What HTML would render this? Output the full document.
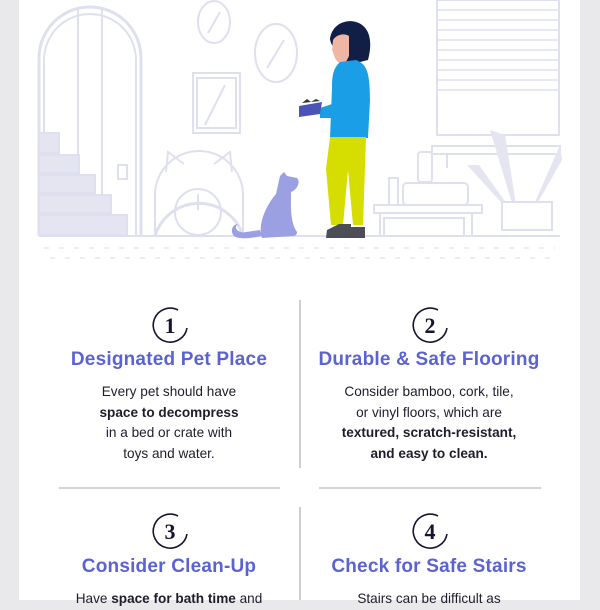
<!DOCTYPE html>
<html><head><style>
body{margin:0;width:600px;height:600px;overflow:hidden;background:#e9e9ec;font-family:"Liberation Sans",sans-serif}
.page{position:absolute;left:19px;top:0;width:561px;height:600px;background:#fff}
h2{position:absolute;margin:0;width:300px;text-align:center;font-size:19px;font-weight:bold;color:#5b63d3;letter-spacing:0.2px}
p{position:absolute;margin:0;width:300px;text-align:center;font-size:13.6px;line-height:20.5px;color:#1d1d2b}
b{font-weight:bold}
.v{position:absolute;left:299px;width:2px;background:#cfcfd3}
.h{position:absolute;top:487px;height:2px;background:#d3d3d7}
</style></head><body>
<div class="page"></div>
<svg width="600" height="270" style="position:absolute;left:0;top:0" fill="none" stroke="#dfe0ef" stroke-width="2">
<path d="M39 236V58a51 51 0 0 1 102 0V236" stroke-width="3"/>
<path d="M44 236V60a46 46 0 0 1 92 0V236"/>
<line x1="78" y1="8" x2="78" y2="236"/><line x1="102" y1="8" x2="102" y2="236"/>
<g fill="#e4e5f1" stroke="#dfe0ef">
<rect x="39" y="133" width="20" height="20"/><rect x="39" y="155" width="40" height="18"/><rect x="39" y="175" width="56" height="18"/><rect x="39" y="195" width="72" height="18"/><rect x="39" y="215" width="88" height="20"/>
</g>
<ellipse cx="214" cy="22" rx="16" ry="21"/><line x1="208" y1="33" x2="220" y2="12"/>
<ellipse cx="276" cy="53" rx="21" ry="29"/><line x1="267" y1="68" x2="284" y2="40"/>
<rect x="193" y="73" width="47" height="60"/><rect x="197" y="78" width="39" height="50"/><line x1="205" y1="125" x2="225" y2="85"/>
<rect x="118" y="165" width="9" height="14"/>
<path d="M155 236a46 46 0 0 1 88 0" stroke-width="3"/>
<path d="M155 236V195a43 43 0 0 1 88 0V236"/>
<path d="M166 172l2-20 16 12M232 172l-2-20-16 12"/>
<circle cx="198" cy="212" r="23"/><line x1="198" y1="194" x2="198" y2="210"/>
<rect x="437" y="0" width="122" height="135"/>
<g stroke-width="1.5"><line x1="437" y1="10" x2="559" y2="10"/><line x1="437" y1="20" x2="559" y2="20"/><line x1="437" y1="30" x2="559" y2="30"/><line x1="437" y1="40" x2="559" y2="40"/><line x1="437" y1="50" x2="559" y2="50"/><line x1="437" y1="60" x2="559" y2="60"/><line x1="437" y1="70" x2="559" y2="70"/><line x1="437" y1="80" x2="559" y2="80"/><line x1="437" y1="90" x2="559" y2="90"/></g>
<rect x="432" y="146" width="128" height="8"/><line x1="447" y1="154" x2="447" y2="168"/>
<g fill="#e4e5f1" stroke="none"><path d="M520 230l-30-100 15 5z"/><path d="M522 225l-55-60 12 0z"/><path d="M525 225l35-80 2 15z"/></g>
<path d="M502 230h50v-28h-50z" fill="#fff"/>
<rect x="374" y="205" width="108" height="8"/><line x1="380" y1="213" x2="380" y2="236"/><line x1="472" y1="213" x2="472" y2="236"/><rect x="384" y="218" width="80" height="18"/>
<rect x="403" y="183" width="65" height="22" rx="4"/><rect x="418" y="152" width="14" height="30" rx="3"/><rect x="389" y="178" width="9" height="27"/>
<line x1="39" y1="236" x2="560" y2="236"/>
<g stroke-dasharray="5 10" stroke-width="1.3"><line x1="44" y1="248" x2="555" y2="248"/><line x1="50" y1="258" x2="555" y2="258"/></g>
<g fill="#9ba0e2" stroke="none">
<path d="M262 238c-4-12 2-30 14-44l4-18 4-4 3 4 10 2c4 4 0 12-6 14 0 14-1 30 6 40 0 3-2 4-4 4z"/>
<path d="M262 236c-10 2-22 4-28 0-4-4-2-12 4-12-6 4 2 10 8 8l14-2z"/>
</g>
<path d="M330 39c2-15 16-20 26-17 14 4 17 20 12 38l-8 2c-8 6-16 0-19-8 0 0-10-6-11-15z" fill="#111f47" stroke="none"/>
<path d="M333 40c2-4 10-8 16-4v20l-4 8c-5 0-8-2-10-6l-3-8z" fill="#f0b6a4" stroke="none"/>
<path d="M340 62l16-2c10 4 14 10 14 40l-2 38h-38l2-50c0-15 2-20 8-26z" fill="#1a9ee6" stroke="none"/>
<path d="M320 108c12-4 22-8 32-4v14c-10 0-22 0-32 0z" fill="#1a9ee6" stroke="none"/>
<path d="M330 137h36l-3 88h-10l-5-55-5 55h-12l-5-56z" fill="#d6dd00" stroke="none"/>
<path d="M327 230l12-6h12v14h-25zM351 227h14v11h-14z" fill="#4d4d55" stroke="none"/>
<path d="M299 106l23-4-2 12-21 3z" fill="#4b53b9" stroke="none"/>
<path d="M302 103l5-4 4 3 5-3 4 2z" fill="#333" stroke="none"/>
</svg>

<div class="v" style="top:300px;height:168px"></div>
<div class="v" style="top:507px;height:93px"></div>
<div class="h" style="left:59px;width:221px"></div>
<div class="h" style="left:319px;width:222px"></div>

<svg width="600" height="600" style="position:absolute;left:0;top:0" fill="none" stroke="#15162e" stroke-width="1.6">
<path d="M178 310A17 17 0 1 0 187 328"/><path d="M438 310A17 17 0 1 0 447 328"/>
<path d="M178 516A17 17 0 1 0 187 534"/><path d="M438 516A17 17 0 1 0 447 534"/>
<g fill="#15162e" stroke="none" font-family="Liberation Serif,serif" font-weight="bold" font-size="22" text-anchor="middle">
<text x="170" y="333">1</text><text x="430" y="333">2</text><text x="170" y="539">3</text><text x="430" y="539">4</text></g>
</svg>

<h2 style="left:19px;top:349px">Designated Pet Place</h2>
<h2 style="left:279px;top:349px">Durable &amp; Safe Flooring</h2>
<p style="left:19px;top:382px">Every pet should have<br><b>space to decompress</b><br>in a bed or crate with<br>toys and water.</p>
<p style="left:279px;top:382px">Consider bamboo, cork, tile,<br>or vinyl floors, which are<br><b>textured, scratch-resistant,<br>and easy to clean.</b></p>
<h2 style="left:19px;top:556px">Consider Clean-Up</h2>
<h2 style="left:279px;top:556px">Check for Safe Stairs</h2>
<p style="left:19px;top:589px">Have <b>space for bath time</b> and</p>
<p style="left:279px;top:589px">Stairs can be difficult as</p>
</body></html>
